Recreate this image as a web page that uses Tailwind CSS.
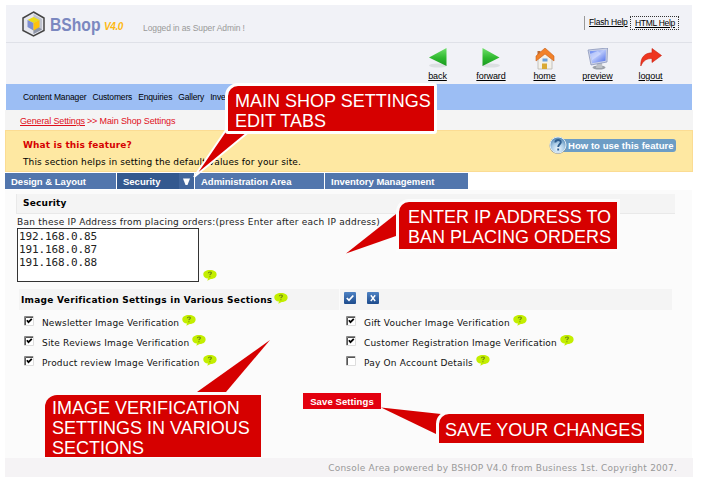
<!DOCTYPE html>
<html lang="en">
<head>
<meta charset="utf-8">
<title>BShop V4.0</title>
<script src="https://cdn.jsdelivr.net/npm/@tailwindcss/browser@4"></script>
</head>
<body class="bg-white">
<svg class="absolute size-0">
  <defs>
    <symbol id="tip" viewBox="0 0 14 11"><path d="M7 0C11 0 13.6 1.8 13.6 4.4S11.500 8.800 7.800 8.900L4.300 10.800L5 8.600C2 8.100.3 6.500.3 4.400C.3 1.800 3 0 7 0Z" fill="#c3ee00"/><path d="M5.300 3.200C5.500 1.700 8.400 1.600 8.400 3.100C8.400 4.100 6.900 4 6.900 5.300M6.900 6.200V7.200" fill="none" stroke="#6f8a10" stroke-width="1.100"/></symbol>
    <symbol id="on" viewBox="0 0 10 10"><path d="M0 0H10V10H0Z" fill="#fff"/><path d="M.5 10V.5H10" fill="none" stroke="#888"/><path d="M1.500 9V1.500H9" fill="none" stroke="#555"/><path d="M9.500 0V9.500H0" fill="none" stroke="#ddd"/><path d="M2.900 4.200L4.500 6.200L7.800 2.900" fill="none" stroke="#000" stroke-width="1.800"/></symbol>
    <symbol id="off" viewBox="0 0 10 10"><path d="M0 0H10V10H0Z" fill="#fff"/><path d="M.5 10V.5H10" fill="none" stroke="#888"/><path d="M1.500 9V1.500H9" fill="none" stroke="#555"/><path d="M9.500 0V9.500H0" fill="none" stroke="#ddd"/></symbol>
    <linearGradient id="gr" x1="0" y1="0" x2="0" y2="1"><stop offset="0" stop-color="#6fe06a"/><stop offset=".55" stop-color="#2fb82f"/><stop offset="1" stop-color="#199a20"/></linearGradient>
    <linearGradient id="bl" x1="0" y1="0" x2="1" y2="1"><stop offset="0" stop-color="#5b7ff0"/><stop offset=".45" stop-color="#b9c8fb"/><stop offset="1" stop-color="#4a6be8"/></linearGradient>
    <linearGradient id="bx" x1="0" y1="0" x2="0" y2="1"><stop offset="0" stop-color="#4f83c4"/><stop offset="1" stop-color="#1d4b8c"/></linearGradient>
    <radialGradient id="hp" cx=".5" cy=".75" r=".7"><stop offset="0" stop-color="#f2faff"/><stop offset=".55" stop-color="#a9cbe6"/><stop offset="1" stop-color="#5588b4"/></radialGradient>
  </defs>
</svg>
<div class="relative h-[488px] w-[702px] overflow-hidden bg-white pt-[5px] pl-[5px] font-['DejaVu_Sans',Verdana,sans-serif] text-[9px] leading-[12px] whitespace-nowrap text-[#222]">
  <div class="w-[688px]">
    <header class="ml-px w-[686px] bg-[#f1f2f7]">
      <div class="flex h-[38px] items-start border-b border-[#dfe1e8] pl-[16px]">
        <svg class="mt-[6px] h-[26px] w-[23px] shrink-0" viewBox="0 0 23 26">
          <path d="M11.500 1L22 7V19.500L11.500 25L1 19.500V7Z" fill="#e6e7ee" stroke="#444" stroke-width="1.500"/>
          <path d="M11.500 3L20 8V18.500L11.500 23Z" fill="#bfc3cf"/><path d="M11.500 23L20 18.500L15 15L11.500 18Z" fill="#8f96a8"/>
          <path d="M11.500 6L17.500 9L11.500 12L5.500 9Z" fill="#ecdc16"/><path d="M5.500 9L11.500 12V19.500L5.500 16Z" fill="#7d8ed0"/><path d="M17.500 9L11.500 12V19.500L17.500 16Z" fill="#ffc20a"/>
        </svg>
        <div class="ml-[5px] mt-[10px] w-[55px] origin-left scale-x-[0.87] font-['Liberation_Sans',Arial,sans-serif] text-[18px] leading-[20px] font-bold text-[#7b88c0]">BShop</div>
        <div class="mt-[14px] ml-[-7px] w-[44px] pl-[6px] font-['Liberation_Sans',Arial,sans-serif] text-[10px] leading-[16px] font-bold tracking-[-0.4px] italic text-[#fdb913]">V4.0</div>
        <div class="mt-[17px] ml-px font-['Liberation_Sans',Arial,sans-serif] text-[8.5px] tracking-[-0.1px] text-[#999]">Logged in as Super Admin !</div>
        <div class="ml-auto mr-[13px] mt-[11px] flex h-[14px] items-stretch font-['Liberation_Sans',Arial,sans-serif] text-[8.5px] leading-[13px] text-black underline">
          <span class="w-[46px] border-l border-[#999] pl-[4px] tracking-[-0.2px]">Flash Help</span>
          <span class="w-[49px] border border-dotted border-[#333] pl-[4px] leading-[12px] tracking-[-0.3px]">HTML Help</span>
        </div>
      </div>
      <div class="flex h-[41px] justify-end pr-[15px] pt-[5px] font-['Liberation_Sans',Arial,sans-serif] text-[9px] leading-[10px] tracking-[-0.1px] text-black underline">
        <div class="flex w-[53px] flex-col items-center"><svg class="h-[20px] w-[22px]" viewBox="0 0 22 20"><ellipse cx="11" cy="17.500" rx="9" ry="2" fill="#dcdfe2"/><path d="M2 9.500L19.500 0V18Z" fill="url(#gr)"/></svg><span class="mt-[3px]">back</span></div>
        <div class="flex w-[54px] flex-col items-center"><svg class="h-[20px] w-[22px]" viewBox="0 0 22 20"><ellipse cx="11" cy="17.500" rx="9" ry="2" fill="#dcdfe2"/><path d="M19.500 9.500L2.500 0V18Z" fill="url(#gr)"/></svg><span class="mt-[3px]">forward</span></div>
        <div class="flex w-[53px] flex-col items-center"><svg class="h-[22px] w-[20px]" viewBox="0 0 20 22"><path d="M3 11L10 5L17 11V21H3Z" fill="#f3f1ea" stroke="#b9b6b0" stroke-width=".8"/><path d="M2.500 3H5.500V8H2.500Z" fill="#b86a35"/><path d="M1 13V8L10 0L19 8V13L10 6Z" fill="#f2822a" stroke="#c8601c" stroke-width=".6"/><path d="M7 15.500H12V21H7Z" fill="#d9a934"/><path d="M7.500 10.500H12.500V13.500H7.500Z" fill="#6aa0dd"/></svg><span class="mt-px">home</span></div>
        <div class="flex w-[53px] flex-col items-center"><svg class="h-[22px] w-[22px]" viewBox="0 0 22 22"><ellipse cx="12" cy="19.500" rx="6.500" ry="2" fill="#9ba0a8"/><path d="M10 15H15L15.500 20H9Z" fill="#bcc0c6"/><path d="M1 2L20.500 0L20 14L4 17Z" fill="#ccd2e6" stroke="#7f8db5" stroke-width=".7"/><path d="M2.700 3.300L19 1.700L18.500 12.700L5 15.200Z" fill="url(#bl)"/><path d="M3 6L11 3L14 6L5 12Z" fill="#d5defe" opacity=".6"/></svg><span class="mt-px">preview</span></div>
        <div class="flex w-[53px] flex-col items-center"><svg class="h-[20px] w-[22px]" viewBox="0 0 22 20"><path d="M.8 18C.5 10 4 5 12 4.800V.5L21.500 7.500L12 14.500V10.500C7 10.500 3.500 12 .8 18Z" fill="#ee3620" stroke="#c8200f" stroke-width=".6"/></svg><span class="mt-[3px]">logout</span></div>
      </div>
      <nav class="flex h-[26px] items-center gap-[6px] bg-[#9cbef4] pl-[17px] font-['Liberation_Sans',Arial,sans-serif] text-[8.5px] tracking-[-0.15px] text-black">
        <span>Content Manager</span><span>Customers</span><span>Enquiries</span><span>Gallery</span><span class="w-[16px] overflow-hidden">Inventory</span>
      </nav>
    </header>
    <div class="flex h-[20px] items-center gap-[2px] bg-[#f4f4f4] pl-[15px] pt-[2px] font-['Liberation_Sans',Arial,sans-serif] text-[9px] tracking-[-0.13px] text-[#e0101c]"><span class="underline">General Settings</span><span>&gt;&gt; Main Shop Settings</span></div>
    <section class="flex h-[42px] justify-between border border-[#fbdc93] bg-[#fee8a2] pl-[17px] pr-[16px]">
      <div class="pt-[8px]">
        <h2 class="font-bold tracking-[0.12px] text-[#d60000]">What is this feature?</h2>
        <p class="mt-[5px] tracking-[0.12px] text-black">This section helps in setting the default values for your site.</p>
      </div>
      <div class="mt-[5px] flex h-[19px] items-center">
        <svg class="relative z-10 -mr-[9px] size-[19px]" viewBox="0 0 19 19"><circle cx="9" cy="9.500" r="8.500" fill="#8a8f90"/><circle cx="9" cy="9" r="8" fill="url(#hp)" stroke="#ddebf5"/><path d="M6.300 6.500C6.500 3.200 11.900 3.300 11.800 6.300C11.800 8.300 9.200 8.400 9.200 11M9.200 12.500V14.500" fill="none" stroke="#2f5f90" stroke-width="1.900"/></svg>
        <span class="h-[13px] w-[117px] rounded-[3px] bg-[#6d9dc5] pl-[9px] font-['Liberation_Sans',Arial,sans-serif] text-[9.5px] leading-[14px] font-bold tracking-[0.05px] text-white">How to use this feature</span>
      </div>
    </section>
    <div class="mt-px flex h-[16px] w-[463px] gap-px bg-white font-['Liberation_Sans',Arial,sans-serif] text-[9.5px] leading-[17px] font-bold text-white">
      <span class="w-[111px] bg-[#5276ad] pl-[6px]">Design &amp; Layout</span>
      <span class="flex w-[77px] justify-between bg-[#34598f] pl-[6px]">Security<svg class="h-[16px] w-[15px] bg-[#42669c]" viewBox="0 0 15 16"><path d="M4 5.500H11L8.500 12H6.500Z" fill="#fff"/></svg></span>
      <span class="w-[129px] bg-[#5276ad] pl-[6px]">Administration Area</span>
      <span class="w-[143px] bg-[#5276ad] pl-[6px]">Inventory Management</span>
    </div>
    <main class="mt-px h-[268px] w-[687px] bg-[#fbfbfb] pt-[4px] pl-[11px]">
      <h3 class="h-[20px] w-[659px] border-b border-l border-[#e9e9e9] bg-[#f4f4f4] pl-[6px] leading-[19px] font-bold tracking-[0.2px] text-black">Security</h3>
      <p class="mt-[3px] pl-px leading-[11px] tracking-[0.24px]">Ban these IP Address from placing orders:(press Enter after each IP address)</p>
      <div class="flex items-end gap-[4px] pl-px">
        <div class="h-[54px] w-[182px] border border-[#333] bg-white pt-px pl-px font-['DejaVu_Sans_Mono','Liberation_Mono',monospace] text-[11px] leading-[13px] tracking-[-0.13px] whitespace-pre text-[#222]">192.168.0.85
191.168.0.87
191.168.0.88</div>
        <svg class="mb-px h-[11px] w-[14px]"><use href="#tip"/></svg>
      </div>
      <div class="mt-[7px] ml-[3px] flex h-[21px] w-[653px] gap-px">
        <div class="flex w-[320px] gap-[2px] bg-[#f4f4f4] pl-[2px]"><h3 class="leading-[23px] font-bold tracking-[0.27px] text-black">Image Verification Settings in Various Sections</h3><svg class="mt-[4px] h-[11px] w-[14px]"><use href="#tip"/></svg></div>
        <div class="flex flex-1 gap-[11px] bg-[#f4f4f4] pt-[3px] pl-[4px]">
          <svg class="size-[12px]" viewBox="0 0 12 12"><rect width="12" height="12" rx="1" fill="url(#bx)"/><path d="M2.800 6L5 8.300L9.300 3.500" fill="none" stroke="#fff" stroke-width="1.800"/></svg>
          <svg class="size-[12px]" viewBox="0 0 12 12"><rect width="12" height="12" rx="1" fill="url(#bx)"/><path d="M3.800 3.300L8.200 9M8.200 3.300L3.800 9" fill="none" stroke="#fff" stroke-width="1.400"/></svg>
        </div>
      </div>
      <div class="grid grid-cols-[322px_1fr] pt-[5px] pl-[8px] tracking-[0.19px] text-[#111]">
        <div class="flex h-[20px]"><svg class="mt-px size-[10px]"><use href="#on"/></svg><span class="ml-[8px] mr-[3px] mt-[2px] tracking-[0.14px]">Newsletter Image Verification</span><svg class="h-[11px] w-[14px]"><use href="#tip"/></svg></div>
        <div class="flex h-[20px]"><svg class="mt-px size-[10px]"><use href="#on"/></svg><span class="ml-[8px] mr-[3px] mt-[2px]">Gift Voucher Image Verification</span><svg class="h-[11px] w-[14px]"><use href="#tip"/></svg></div>
        <div class="flex h-[20px]"><svg class="mt-px size-[10px]"><use href="#on"/></svg><span class="ml-[8px] mr-[3px] mt-[2px]">Site Reviews Image Verification</span><svg class="h-[11px] w-[14px]"><use href="#tip"/></svg></div>
        <div class="flex h-[20px]"><svg class="mt-px size-[10px]"><use href="#on"/></svg><span class="ml-[8px] mr-[3px] mt-[2px]">Customer Registration Image Verification</span><svg class="h-[11px] w-[14px]"><use href="#tip"/></svg></div>
        <div class="flex h-[20px]"><svg class="mt-px size-[10px]"><use href="#on"/></svg><span class="ml-[8px] mr-[3px] mt-[2px]">Product review Image Verification</span><svg class="h-[11px] w-[14px]"><use href="#tip"/></svg></div>
        <div class="flex h-[20px]"><svg class="mt-px size-[10px]"><use href="#off"/></svg><span class="ml-[8px] mr-[3px] mt-[2px]">Pay On Account Details</span><svg class="h-[11px] w-[14px]"><use href="#tip"/></svg></div>
      </div>
      <button class="mt-[18px] ml-[287px] block h-[16px] w-[78px] bg-[#e3000f] font-['Liberation_Sans',Arial,sans-serif] text-[9.5px] leading-[17px] font-bold tracking-[0.1px] text-white">Save Settings</button>
    </main>
    <footer class="h-[19px] bg-[#f5f3f5] pr-[16px] text-right leading-[20px] tracking-[0.22px] text-[#999]">Console Area powered by BSHOP V4.0 from Business 1st. Copyright 2007.</footer>
  </div>

  <svg class="absolute inset-0 h-[488px] w-[702px]" viewBox="0 0 702 488">
    <g fill="#d60000" stroke="#fff" stroke-width="2">
      <path d="M194 177L226 130H251Z"/>
    </g>
    <g fill="#d60000">
      <path d="M346 253.500L396 214V236Z"/><path d="M270 340L197 392H226Z"/><path d="M381 407.500L441 414L436 434Z"/>
    </g>
  </svg>
  <div class="absolute top-[83px] left-[225px] h-[51px] w-[212px] rounded-[3px] rounded-tl-[13px] border-[3px] border-white bg-[#d60000] pt-[5px] pl-[7px] font-['Liberation_Sans',Arial,sans-serif] text-[18px] leading-[20px] text-white">MAIN SHOP SETTINGS<br>EDIT TABS</div>
  <div class="absolute top-[199px] left-[396px] h-[53px] w-[224px] rounded-tl-[13px] border-[3px] border-[#fcfcfc] bg-[#d60000] pt-[5px] pl-[9px] font-['Liberation_Sans',Arial,sans-serif] text-[18px] leading-[20px] text-white">ENTER IP ADDRESS TO<br>BAN PLACING ORDERS</div>
  <div class="absolute top-[395px] left-[45px] h-[62px] w-[216px] rounded-tl-[12px] bg-[#d60000] pt-[3px] pl-[7px] font-['Liberation_Sans',Arial,sans-serif] text-[18px] leading-[20px] text-white">IMAGE VERIFICATION<br>SETTINGS IN VARIOUS<br>SECTIONS</div>
  <div class="absolute top-[411px] left-[436px] h-[35px] w-[211px] rounded-tl-[13px] border-[3px] border-[#fcfcfc] bg-[#d60000] pt-[6px] pl-[6px] font-['Liberation_Sans',Arial,sans-serif] text-[18px] leading-[20px] text-white">SAVE YOUR CHANGES</div>
</div>
</body>
</html>
